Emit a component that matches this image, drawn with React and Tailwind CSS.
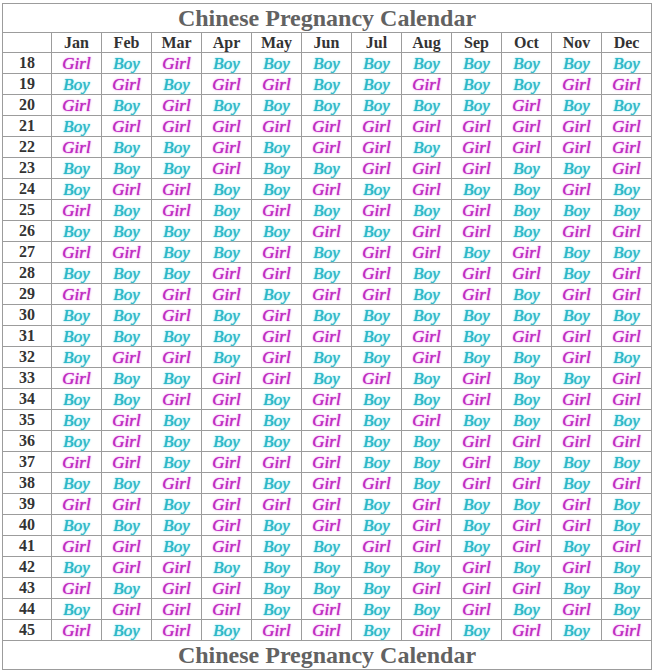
import React from "react";

const months = ["Jan","Feb","Mar","Apr","May","Jun","Jul","Aug","Sep","Oct","Nov","Dec"];
const raw = {
  18: "GBGBBBBBBBBB",
  19: "BGBGGBBGBBGG",
  20: "GBGBBBBBBGBB",
  21: "BGGGGGGGGGGG",
  22: "GBBGBGGBGGGG",
  23: "BBBGBBGGGBBG",
  24: "BGGBBGBGBBGB",
  25: "GBGBGBGBGBBB",
  26: "BBBBBGBGGBGG",
  27: "GGBBGBGGBGBB",
  28: "BBBGGBGBGGBG",
  29: "GBGGBGGBGBGG",
  30: "BBGBGBBBBBBB",
  31: "BBBBGGBGBGGG",
  32: "BGGBGBBGBBGB",
  33: "GBBGGBGBGBBG",
  34: "BBGGBGBBGBGG",
  35: "BGBGBGBGBBGB",
  36: "BGBBBGBBGGGG",
  37: "GGBGGGBBGBBB",
  38: "BBGGBGGBGGBG",
  39: "GGBGGGBGBBGB",
  40: "BBBGBGBGBGGB",
  41: "GGBGBBGGBGBG",
  42: "BGGBBBBBGBGB",
  43: "GBGGBBBGGGBB",
  44: "BGGGBGBBGBGB",
  45: "GBGBGGBGBGBG",
};

const ages = Object.keys(raw).map(Number).sort((a, b) => a - b);

function Title() {
  return (
    <tr className="h-[29px]">
      <td
        colSpan={13}
        className="border border-[#9c9c9c] text-center align-middle text-[24px] font-bold leading-none text-[#626262]"
      >
        Chinese Pregnancy Calendar
      </td>
    </tr>
  );
}

export default function App() {
  return (
    <div className="min-h-[671px] w-[653px] bg-white pt-[3px] pl-[2px] font-['Liberation_Serif','Times_New_Roman',serif]">
      <table className="w-[649px] table-fixed border-collapse border border-[#9c9c9c]">
        <colgroup>
          <col className="w-[49px]" />
          {months.map((m) => (
            <col key={m} className="w-[50px]" />
          ))}
        </colgroup>
        <tbody>
          <Title />
          <tr className="h-[20px]">
            <td className="border border-[#9c9c9c]"></td>
            {months.map((m) => (
              <td
                key={m}
                className="border border-[#9c9c9c] text-center align-middle text-[16px] font-bold leading-none text-[#333333]"
              >
                {m}
              </td>
            ))}
          </tr>
          {ages.map((age) => (
            <tr key={age} className="h-[21px]">
              <td className="border border-[#9c9c9c] text-center align-middle text-[16px] font-bold leading-none text-[#333333]">
                {age}
              </td>
              {raw[age].split("").map((c, i) =>
                c === "G" ? (
                  <td
                    key={i}
                    className="border border-[#9c9c9c] text-center align-middle text-[17px] italic leading-none text-[#c02ac2] [text-shadow:0_0_1px_#c02ac2,0_0_3px_#f5b5f5]"
                  >
                    Girl
                  </td>
                ) : (
                  <td
                    key={i}
                    className="border border-[#9c9c9c] text-center align-middle text-[17px] italic leading-none text-[#2cb8c9] [text-shadow:0_0_1px_#2cb8c9,0_0_3px_#b5edf3]"
                  >
                    Boy
                  </td>
                )
              )}
            </tr>
          ))}
          <Title />
        </tbody>
      </table>
    </div>
  );
}
